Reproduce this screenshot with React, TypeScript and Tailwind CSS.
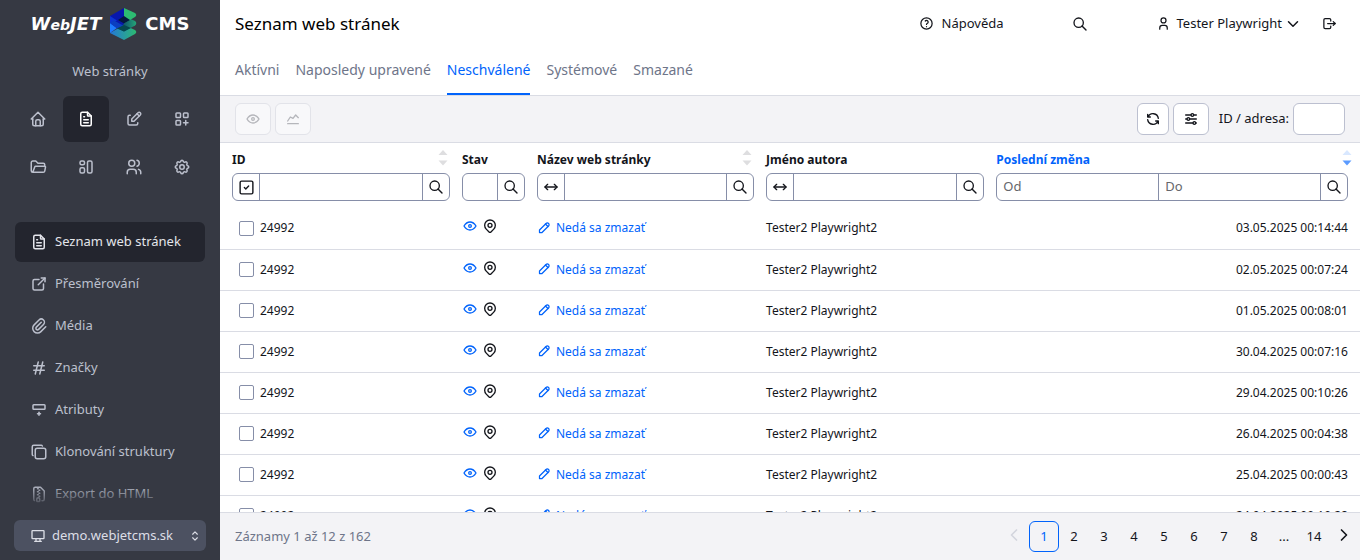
import {
  TbHome, TbFileText, TbEdit, TbLayoutGridAdd, TbFolderOpen, TbUsers, TbSettings,
  TbExternalLink, TbPaperclip, TbHash, TbRowInsertBottom, TbCopy, TbFileZip,
  TbDeviceDesktop, TbSelector, TbHelp, TbSearch, TbUser, TbChevronDown, TbLogout,
  TbRefresh, TbAdjustmentsHorizontal, TbEye, TbChartLine, TbSquareCheck,
  TbArrowsHorizontal, TbMapPin, TbPencil, TbChevronLeft, TbChevronRight,
} from "react-icons/tb";
import type { ReactNode } from "react";

function BlocksIcon({ size = 18 }: { size?: number }) {
  return (
    <svg width={size} height={size} viewBox="0 0 24 24" fill="none" stroke="currentColor" strokeWidth="2" strokeLinejoin="round">
      <rect x="4" y="4" width="6" height="5" rx="2" />
      <rect x="4" y="13" width="6" height="7" rx="2" />
      <rect x="14" y="4" width="6" height="16" rx="2" />
    </svg>
  );
}

function Logo() {
  return (
    <a href="#" aria-label="WebJET CMS" className="flex h-12 items-center justify-center gap-2 font-['DejaVu_Sans'] text-lg font-bold text-white">
      <span className="italic">W<span className="text-sm">eb</span>JET</span>
      <svg width="28" height="32" viewBox="0 0 28 32">
        <defs>
          <linearGradient id="logo-base" x1="0" x2="1">
            <stop offset="0" stopColor="#2477d8" />
            <stop offset="1" stopColor="#2cba70" />
          </linearGradient>
          <linearGradient id="logo-middle" x1="0" x2="1">
            <stop offset="0.35" stopColor="#0a3a66" />
            <stop offset="1" stopColor="#25a578" />
          </linearGradient>
        </defs>
        <path d="M1 25 L15 17 L26 22 Q28.500 24 26 26 L15 32 Z" fill="url(#logo-base)" />
        <path d="M1 16 L15 8 L26 13 Q28.500 15 26 17.500 L15 23.500 Z" fill="url(#logo-middle)" />
        <path d="M15 0 L26 5 Q28.500 7 26 9 L15 15.500 Z" fill="#2dbb72" />
        <path d="M1 8 L15 0 V16 L1 24 Z" fill="#0717ac" />
        <path d="M1 8 L8 12.500 L1 16 Z" fill="#0d35d0" />
        <path d="M1 15 L8 20 L1 25 Z" fill="#1f7dff" />
        <path d="M1 15 L5 12.500 L15 18 L8 20.500 Z" fill="#0b3fc0" />
        <path d="M15 8 L21 12 L15 15.500 L9 12 Z" fill="#04183f" />
        <path d="M15 17 L22 20 L15 23.500 L8 20.500 Z" fill="#05484f" />
      </svg>
      <span>CMS</span>
    </a>
  );
}

const modules = [
  { label: "Úvod", icon: <TbHome size={18} /> },
  { label: "Web stránky", icon: <TbFileText size={18} />, active: true },
  { label: "Příspěvky", icon: <TbEdit size={18} /> },
  { label: "Aplikace", icon: <TbLayoutGridAdd size={18} /> },
  { label: "Soubory", icon: <TbFolderOpen size={18} /> },
  { label: "Šablony", icon: <BlocksIcon /> },
  { label: "Uživatelé", icon: <TbUsers size={18} /> },
  { label: "Nastavení", icon: <TbSettings size={18} /> },
];

const menu = [
  { label: "Seznam web stránek", icon: <TbFileText size={18} />, active: true },
  { label: "Přesměrování", icon: <TbExternalLink size={18} /> },
  { label: "Média", icon: <TbPaperclip size={18} /> },
  { label: "Značky", icon: <TbHash size={18} /> },
  { label: "Atributy", icon: <TbRowInsertBottom size={18} /> },
  { label: "Klonování struktury", icon: <TbCopy size={18} /> },
  { label: "Export do HTML", icon: <TbFileZip size={18} /> },
];

function Sidebar() {
  return (
    <aside className="flex w-[220px] shrink-0 flex-col bg-[#363943] text-[#bcc0cd]">
      <Logo />
      <div className="flex h-12 items-center justify-center">Web stránky</div>
      <nav className="grid grid-cols-4 gap-0.5 px-[15px]">
        {modules.map((m) => (
          <a
            key={m.label}
            href="#"
            aria-label={m.label}
            className={`flex h-[46px] items-center justify-center rounded-md ${m.active ? "bg-[#23252e] text-white" : ""}`}
          >
            {m.icon}
          </a>
        ))}
      </nav>
      <div className="relative mt-8 min-h-0 flex-1 overflow-hidden px-[15px]">
        <nav className="flex flex-col gap-0.5">
          {menu.map((m) => (
            <a
              key={m.label}
              href="#"
              className={`flex h-10 shrink-0 items-center gap-[7px] rounded-md pl-[15px] ${m.active ? "bg-[#23252e] text-[#e4e5eb]" : ""}`}
            >
              {m.icon}
              {m.label}
            </a>
          ))}
        </nav>
        <div className="absolute inset-x-0 bottom-0 h-6 bg-linear-to-b from-transparent to-[#363943]" />
      </div>
      <div className="px-3.5 pt-3 pb-[9px]">
        <button type="button" className="flex h-[31px] w-full items-center gap-1.5 rounded-md bg-[#4c5161] pr-1 pl-4 text-[#dcdee6]">
          <TbDeviceDesktop size={16} />
          <span className="flex-1 text-left">demo.webjetcms.sk</span>
          <TbSelector size={14} />
        </button>
      </div>
    </aside>
  );
}

const tabs = ["Aktívni", "Naposledy upravené", "Neschválené", "Systémové", "Smazané"];

function Header() {
  return (
    <header className="border-b border-[#dadce4] px-[15px]">
      <div className="flex h-[47px] items-center text-[#13151b]">
        <h1 className="flex-1 text-[17px] text-black">Seznam web stránek</h1>
        <a href="#" className="flex items-center gap-2">
          <TbHelp size={15} />
          Nápověda
        </a>
        <button type="button" aria-label="Hledat" className="ml-[68px]">
          <TbSearch size={16} />
        </button>
        <button type="button" className="ml-[68px] flex items-center gap-1.5">
          <TbUser size={15} />
          <span className="flex items-center gap-0.5">
            Tester Playwright
            <TbChevronDown size={18} />
          </span>
        </button>
        <button type="button" aria-label="Odhlásit" className="mr-2 ml-5">
          <TbLogout size={15} />
        </button>
      </div>
      <nav className="flex h-12 gap-4 text-sm text-[#6e7589]">
        {tabs.map((t) => (
          <a
            key={t}
            href="#"
            className={`flex items-center border-b-2 ${t === "Neschválené" ? "border-[#0063fb] text-[#0063fb]" : "border-transparent"}`}
          >
            {t}
          </a>
        ))}
      </nav>
    </header>
  );
}

function Toolbar() {
  return (
    <div className="flex items-center gap-1 border-b border-[#dadce4] bg-[#f3f3f6] px-[15px] py-[7px] text-[#13151b]">
      <button type="button" disabled aria-label="Zobrazit" className="flex h-8 w-9 items-center justify-center rounded-md border border-[#e2e3e9] bg-[#f8f8fa] text-[#b5b6bb]">
        <TbEye size={16} />
      </button>
      <button type="button" disabled aria-label="Statistika" className="flex h-8 w-9 items-center justify-center rounded-md border border-[#e2e3e9] bg-[#f8f8fa] text-[#b5b6bb]">
        <TbChartLine size={16} />
      </button>
      <span className="flex-1" />
      <button type="button" aria-label="Obnovit" className="flex h-8 w-8 items-center justify-center rounded-md border border-[#bcc0d0] bg-white">
        <TbRefresh size={16} />
      </button>
      <button type="button" aria-label="Nastavení tabulky" className="flex h-8 w-9 items-center justify-center rounded-md border border-[#bcc0d0] bg-white">
        <TbAdjustmentsHorizontal size={16} />
      </button>
      <label htmlFor="page-id" className="ml-1.5">ID / adresa:</label>
      <input id="page-id" className="h-8 w-[52px] rounded-md border border-[#bcc0d0] bg-white px-2" />
    </div>
  );
}

function SortMark({ sorted = false }: { sorted?: boolean }) {
  return (
    <svg width="10" height="16" viewBox="0 0 10 16" className={sorted ? "text-[#d9e8ff]" : "text-[#dedee0]"}>
      <path d="M0.5 5 L5 0 L9.5 5 Z" fill="currentColor" />
      <path d="M0.5 10.5 L5 15.5 L9.5 10.5 Z" fill={sorted ? "#5b9bff" : "currentColor"} />
    </svg>
  );
}

type FilterProps = { label: string; prefix?: ReactNode; fields?: string[] };

function Filter({ label, prefix, fields = [""] }: FilterProps) {
  return (
    <div className="flex h-7 divide-x divide-[#868ea8] overflow-hidden rounded-md border border-[#868ea8] text-[13px] font-normal">
      {prefix && (
        <button type="button" aria-label={`${label}: způsob hledání`} className="flex w-[27px] shrink-0 items-center justify-center">
          {prefix}
        </button>
      )}
      {fields.map((f) => (
        <input key={f} aria-label={`${label} ${f}`} placeholder={f} className="w-0 min-w-0 flex-1 px-1.5 placeholder:text-[#65666b]" />
      ))}
      <button type="button" aria-label={`${label}: hledat`} className="flex w-[26px] shrink-0 items-center justify-center">
        <TbSearch size={16} />
      </button>
    </div>
  );
}

type HeadProps = FilterProps & { sortable?: boolean; sorted?: boolean; className: string };

function Head({ sortable, sorted, className, ...filter }: HeadProps) {
  return (
    <th className={`pt-[7px] pb-[7px] text-left align-top font-bold ${className}`}>
      <div className={`flex h-[23px] justify-between leading-5 ${sorted ? "text-[#0063fb]" : ""}`}>
        <span className="whitespace-nowrap">{filter.label}</span>
        {sortable && <span className={sorted ? "-mr-1" : "mr-0.5"}><SortMark sorted={sorted} /></span>}
      </div>
      <Filter {...filter} />
    </th>
  );
}

const dates = [
  "03.05.2025 00:14:44",
  "02.05.2025 00:07:24",
  "01.05.2025 00:08:01",
  "30.04.2025 00:07:16",
  "29.04.2025 00:10:26",
  "26.04.2025 00:04:38",
  "25.04.2025 00:00:43",
  "24.04.2025 00:10:28",
];

function PagesTable() {
  return (
    <div className="min-h-0 flex-1 overflow-hidden">
      <table className="w-full table-fixed border-collapse text-xs text-[#13151b]">
        <thead>
          <tr>
            <Head className="w-[20.7%] pr-1.5 pl-3" label="ID" sortable prefix={<TbSquareCheck size={17} />} />
            <Head className="w-[75px] px-1.5" label="Stav" />
            <Head className="w-[20.1%] px-1.5" label="Název web stránky" sortable prefix={<TbArrowsHorizontal size={16} />} />
            <Head className="w-[20.2%] px-1.5" label="Jméno autora" prefix={<TbArrowsHorizontal size={16} />} />
            <Head className="pr-3 pl-1.5" label="Poslední změna" sortable sorted fields={["Od", "Do"]} />
          </tr>
        </thead>
        <tbody>
          {dates.map((d) => (
            <tr key={d} className="h-[41px] border-b border-[#dadce4]">
              <td className="pr-1.5 pl-[19px]">
                <label className="flex items-center gap-1.5">
                  <input type="checkbox" className="size-[15px] appearance-none rounded-xs border border-[#868ea8] bg-white" />
                  24992
                </label>
              </td>
              <td className="px-1.5 pb-1">
                <span className="flex items-center gap-1">
                  <TbEye size={16} className="text-[#0063fb]" />
                  <TbMapPin size={16} />
                </span>
              </td>
              <td className="px-1.5">
                <a href="#" className="flex items-center gap-1 text-[#0063fb]">
                  <TbPencil size={15} className="mb-0.5" />
                  Nedá sa zmazať
                </a>
              </td>
              <td className="px-1.5">Tester2 Playwright2</td>
              <td className="pr-3 pl-1.5 text-right">{d}</td>
            </tr>
          ))}
        </tbody>
      </table>
    </div>
  );
}

function Footer() {
  return (
    <footer className="flex h-12 shrink-0 items-center border-t border-[#dadce4] bg-[#f3f3f6] pr-px pl-[15px] text-[#6e7589]">
      <span className="flex-1">Záznamy 1 až 12 z 162</span>
      <nav className="flex items-center text-[#13151b]">
        <button type="button" disabled aria-label="Předchozí" className="flex w-[30px] justify-center pb-1 text-[#d3d5dd]">
          <TbChevronLeft size={20} />
        </button>
        {["1", "2", "3", "4", "5", "6", "7", "8", "...", "14"].map((p) =>
          p === "..." ? (
            <span key={p} className="w-[30px] text-center">...</span>
          ) : (
            <button
              key={p}
              type="button"
              className={`h-[31px] w-[30px] rounded-md ${p === "1" ? "border border-[#0063fb] text-[#0063fb]" : ""}`}
            >
              {p}
            </button>
          ),
        )}
        <button type="button" aria-label="Další" className="flex w-[30px] justify-center pb-1">
          <TbChevronRight size={20} />
        </button>
      </nav>
    </footer>
  );
}

export default function App() {
  return (
    <div className="flex h-screen bg-white font-['Noto_Sans',sans-serif] text-[13px]">
      <Sidebar />
      <main className="flex min-w-0 flex-1 flex-col">
        <Header />
        <Toolbar />
        <PagesTable />
        <Footer />
      </main>
    </div>
  );
}
